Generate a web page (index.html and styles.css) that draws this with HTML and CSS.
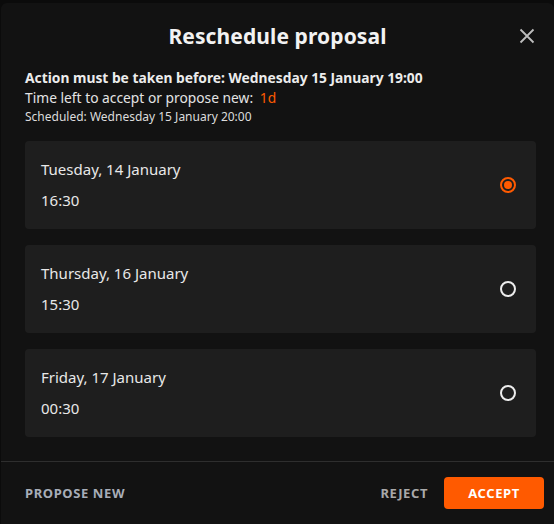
FILE: index.html
```html
<!DOCTYPE html>
<html>
<head>
<meta charset="utf-8">
<link rel="stylesheet" href="styles.css">
</head>
<body>
<div class="dialog">
  <header class="head">
    <h1 class="title">Reschedule proposal</h1>
    <button class="close" aria-label="Close">
      <svg width="16" height="16" viewBox="0 0 16 16"><path d="M1.5 1.5 L14.5 14.5 M14.5 1.5 L1.5 14.5" stroke="#bdbdbd" stroke-width="1.8" fill="none"/></svg>
    </button>
  </header>
  <div class="info">
    <p class="deadline">Action must be taken before: Wednesday 15 January 19:00</p>
    <p class="left">Time left to accept or propose new: <span class="accent">1d</span></p>
    <p class="sched">Scheduled: Wednesday 15 January 20:00</p>
  </div>
  <div class="options">
    <label class="opt">
      <div class="opt-text"><span class="day">Tuesday, 14 January</span><span class="time">16:30</span></div>
      <span class="radio on"></span>
    </label>
    <label class="opt">
      <div class="opt-text"><span class="day">Thursday, 16 January</span><span class="time">15:30</span></div>
      <span class="radio"></span>
    </label>
    <label class="opt">
      <div class="opt-text"><span class="day">Friday, 17 January</span><span class="time">00:30</span></div>
      <span class="radio"></span>
    </label>
  </div>
  <footer class="foot">
    <button class="btn ghost propose">PROPOSE NEW</button>
    <div class="right">
      <button class="btn ghost reject">REJECT</button>
      <button class="btn primary">ACCEPT</button>
    </div>
  </footer>
</div>
</body>
</html>
```
FILE: styles.css
```css
* { box-sizing: border-box; }
html, body { margin: 0; padding: 0; }
body {
  background: #0b0b0b;
  font-family: "Noto Sans", "DejaVu Sans", sans-serif;
  color: #e6e6e6;
  width: 554px;
  height: 524px;
  overflow: hidden;
  padding: 3px 0 0 1px;
}
.dialog {
  background: #121212;
  border-radius: 6px 6px 0 0;
  height: 530px;
  display: flex;
  flex-direction: column;
}
.head {
  position: relative;
  display: flex;
  justify-content: center;
  align-items: center;
  height: 66px;
}
.title {
  margin: 0;
  font-size: 21px;
  font-weight: 700;
  color: #f2f2f2;
  letter-spacing: 0.1px;
}
.close {
  position: absolute;
  right: 19px;
  top: 25px;
  background: none;
  border: 0;
  padding: 0;
  width: 16px;
  height: 16px;
  display: flex;
}
.info { padding: 0 24px; }
.info p { margin: 0; }
.deadline { font-size: 13.8px; font-weight: 700; line-height: 18px; color: #ececec; }
.left { font-size: 13.8px; line-height: 21px; color: #e4e4e4; }
.accent { color: #ff5a00; padding-left: 3px; }
.sched { font-size: 12px; line-height: 18px; color: #dcdcdc; }
.options {
  padding: 15px 18px 0 24px;
  display: flex;
  flex-direction: column;
  gap: 16px;
}
.opt {
  background: #1e1e1e;
  border-radius: 4px;
  height: 88px;
  display: flex;
  align-items: center;
  justify-content: space-between;
  padding: 0 20px 0 16px;
}
.opt-text { display: flex; flex-direction: column; gap: 11px; padding-bottom: 2px; }
.day { font-size: 15px; line-height: 20px; color: #e8e8e8; }
.time { font-size: 15px; line-height: 20px; color: #e8e8e8; }
.radio {
  width: 16px;
  height: 16px;
  border: 2px solid #ededed;
  border-radius: 50%;
  position: relative;
}
.radio.on { border-color: #ff5a00; }
.radio.on::after {
  content: "";
  position: absolute;
  left: 2px; top: 2px;
  width: 8px; height: 8px;
  background: #ff5a00;
  border-radius: 50%;
}
.foot {
  margin-top: 24px;
  border-top: 1px solid #2e2e2e;
  display: flex;
  justify-content: space-between;
  align-items: center;
  padding: 15px 10px 0 24px;
}
.right { display: flex; align-items: center; gap: 16px; }
.btn {
  font-family: inherit;
  border: 0;
  background: none;
  font-size: 13px;
  font-weight: 700;
  letter-spacing: 0.6px;
  padding: 0;
  cursor: pointer;
}
.propose { color: #a7adb8; }
.reject { color: #a9a9a9; }
.primary {
  background: #ff5a00;
  color: #fff;
  width: 100px;
  height: 32px;
  border-radius: 4px;
}
```
